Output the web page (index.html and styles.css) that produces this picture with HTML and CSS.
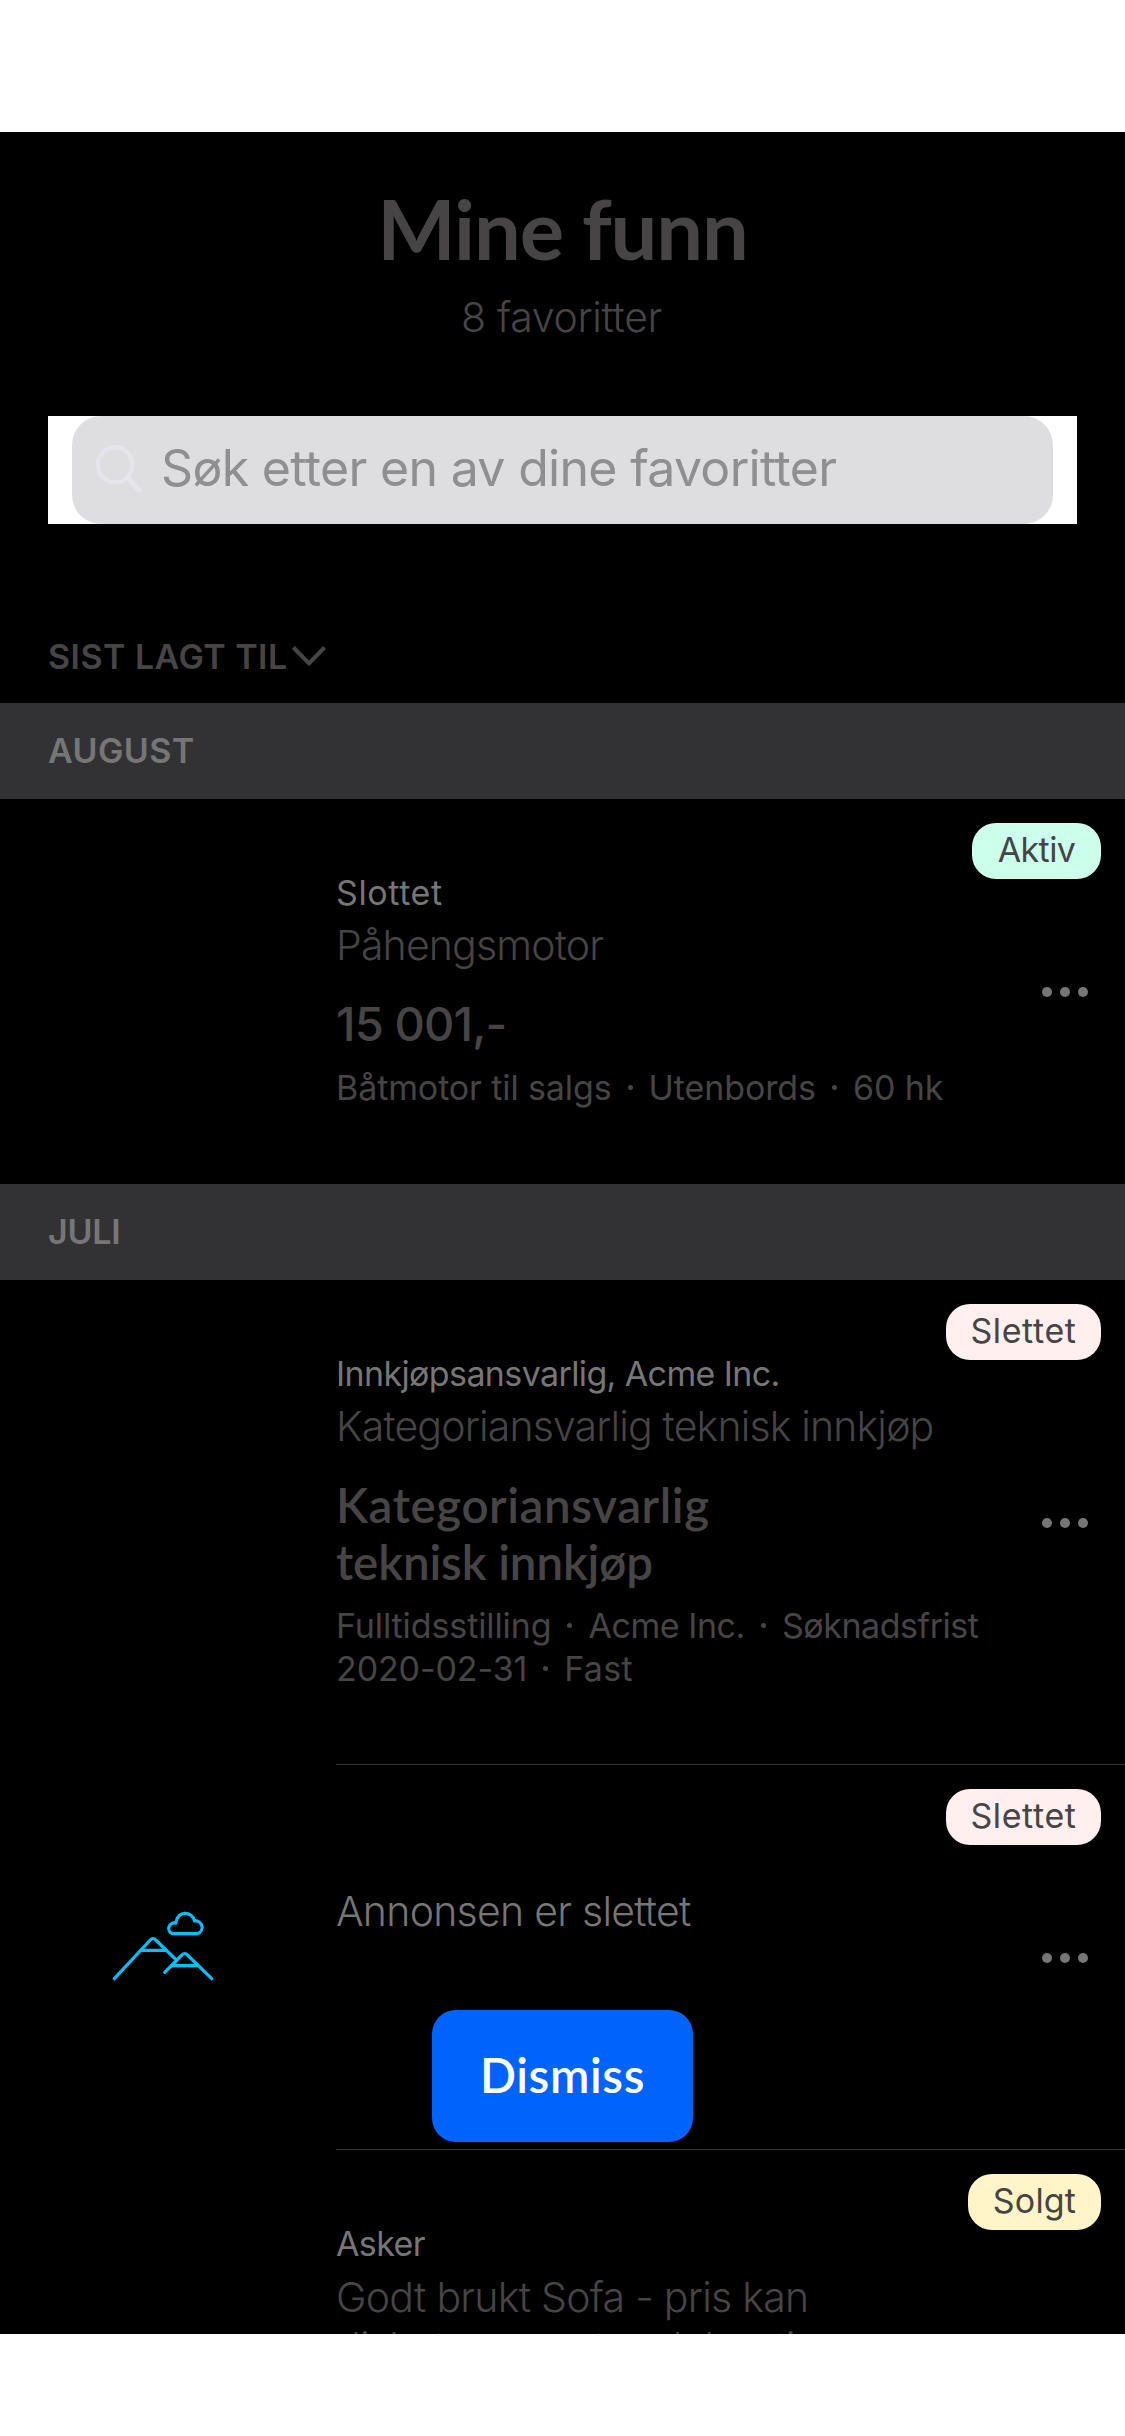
FILE: index.html
```html
<!DOCTYPE html>
<html lang="nb">
<head>
<meta charset="utf-8">
<title>Mine funn</title>
<link rel="stylesheet" href="styles.css">
</head>
<body>
<main class="screen">
  <header class="header">
    <h1 class="title">Mine funn</h1>
    <p class="count">8 favoritter</p>
    <div class="search">
      <div class="search-field">
        <svg class="search-icon" width="48" height="50" viewBox="0 0 48 50" fill="none" stroke="#e5e5ec" stroke-linecap="round">
          <ellipse cx="21" cy="20.8" rx="17.2" ry="17.5" stroke-width="4.4"/>
          <path d="M33.5 34 L45 46" stroke-width="5.4"/>
        </svg>
        <span class="placeholder">Søk etter en av dine favoritter</span>
      </div>
    </div>
    <div class="sort">
      <span class="sort-label">SIST LAGT TIL</span>
      <svg class="chevron" width="34" height="22" viewBox="0 0 34 22" fill="none" stroke="#474445" stroke-width="4">
        <path d="M1.5 1.5 L17 17.5 L32.5 1.5"/>
      </svg>
    </div>
  </header>

  <h2 class="section">AUGUST</h2>
  <article class="row row-short">
    <div class="thumb"></div>
    <div class="content">
      <div class="info">
        <p class="place place-loose">Slottet</p>
        <p class="name">Påhengsmotor</p>
        <p class="price price-amount">15 001,-</p>
        <p class="details">Båtmotor til salgs<i class="sep"></i>Utenbords<i class="sep"></i>60 hk</p>
      </div>
      <div class="more"><i></i><i></i><i></i></div>
    </div>
    <span class="badge badge-active">Aktiv</span>
  </article>

  <h2 class="section section-tight">JULI</h2>
  <article class="row row-tall">
    <div class="thumb"></div>
    <div class="content divided">
      <div class="info">
        <p class="place">Innkjøpsansvarlig, Acme Inc.</p>
        <p class="name">Kategoriansvarlig teknisk innkjøp</p>
        <p class="price">Kategoriansvarlig<br><span class="price-tight">teknisk innkjøp</span></p>
        <p class="details">Fulltidsstilling<i class="sep"></i><span class="details-tight">Acme Inc.</span><i class="sep"></i><span class="details-tight">Søknadsfrist</span><br>2020-02-31<i class="sep"></i><span class="details-loose">Fast</span></p>
      </div>
      <div class="more"><i></i><i></i><i></i></div>
    </div>
    <span class="badge badge-deleted">Slettet</span>
  </article>

  <article class="row row-short">
    <div class="thumb">
      <svg class="mountains" width="102" height="70" viewBox="0 0 102 70" fill="none" stroke="#06befb" stroke-width="3.2" stroke-linecap="round" stroke-linejoin="round">
        <path d="M2.3 67.7 L38.3 29 Q41 26 43.8 29 L64 48.6"/>
        <path d="M29 39.4 H54"/>
        <path d="M52.7 61.3 L69.9 44 Q72.7 41 75.5 44 L99.7 67.7"/>
        <path d="M60 54.6 H85.7"/>
        <path d="M60.5 22.6 A5.2 5.2 0 0 1 63.8 12.2 C64.4 6 68.4 2.4 73 2.4 C77.6 2.4 81.2 5.4 82.6 10 A6.5 6.5 0 0 1 85.6 22.6 Z"/>
      </svg>
    </div>
    <div class="content divided">
      <div class="info info-deleted">
        <p class="name name-deleted">Annonsen er slettet</p>
      </div>
      <div class="more"><i></i><i></i><i></i></div>
    </div>
    <span class="badge badge-deleted">Slettet</span>
  </article>

  <article class="row row-short">
    <div class="thumb"></div>
    <div class="content">
      <div class="info">
        <p class="place">Asker</p>
        <p class="name name-item">Godt brukt Sofa - pris kan<br>diskuteres mot rask henting</p>
      </div>
    </div>
    <span class="badge badge-sold">Solgt</span>
  </article>

  <button class="dismiss" type="button">Dismiss</button>
</main>
</body>
</html>
```
FILE: styles.css
```css
* { box-sizing: border-box; margin: 0; padding: 0; }

html, body { height: 2436px; }

body {
  display: flow-root;
  background: #fff;
  font-family: Inter, "Noto Sans", sans-serif;
  font-size: 34px;
  line-height: 43px;
  color: #474445;
}

.screen {
  position: relative;
  height: 2202px;
  margin-top: 132px;
  overflow: hidden;
  background: #000;
}

/* Header */
.header {
  display: flex;
  flex-direction: column;
  align-items: center;
  height: 571px;
  padding: 47px 48px 0;
}
.title {
  font-family: Lato, "Noto Sans", sans-serif;
  font-size: 83px;
  font-weight: 700;
  line-height: 98px;
  letter-spacing: -1.1px;
}
.count {
  margin-top: 15px;
  font-size: 41px;
  font-weight: 300;
  line-height: 50px;
  letter-spacing: -0.3px;
  transform: translateX(-1px);
}
.search {
  width: 1029px;
  height: 108px;
  margin-top: 74px;
  padding: 0 24px;
  background: #fff;
}
.search-field {
  display: flex;
  align-items: center;
  height: 108px;
  padding: 0 22px 3px;
  border-radius: 29px;
  background: #dedee0;
}
.search-icon { flex: none; }
.placeholder {
  margin-left: 19px;
  font-size: 50px;
  letter-spacing: -0.68px;
  color: #8e8e93;
  white-space: nowrap;
}
.sort {
  display: flex;
  align-self: flex-start;
  align-items: center;
  margin-top: 111px;
}
.sort-label { font-weight: 600; letter-spacing: 0.45px; }
.chevron { margin-left: 4px; }

/* Month headings */
.section {
  height: 96px;
  padding: 26px 48px 0;
  background: #323234;
  font-size: 34px;
  font-weight: 600;
  letter-spacing: 0.4px;
  color: #767676;
}
.section-tight { letter-spacing: -0.2px; }

/* List rows */
.row { position: relative; display: flex; }
.row-short { height: 385px; }
.row-tall { height: 485px; }
.thumb { flex: none; width: 336px; padding: 146px 0 0 112px; }
.mountains { display: block; }
.content {
  display: flex;
  flex: 1;
  justify-content: space-between;
  padding-right: 37px;
}
.divided { border-bottom: 1px solid #38383a; }
.info { width: 656px; padding-top: 72px; }
.info-deleted { padding-top: 121px; }
.place { letter-spacing: -0.62px; color: #767676; }
.place-loose { letter-spacing: 0.6px; }
.name {
  margin-top: 6px;
  font-size: 41px;
  font-weight: 300;
  line-height: 50px;
  letter-spacing: -0.84px;
  white-space: nowrap;
}
.name-deleted { margin-top: 0; letter-spacing: -0.74px; color: #767676; }
.name-item { margin-top: 7px; letter-spacing: -0.72px; }
.price {
  margin-top: 25px;
  font-family: Lato, "Noto Sans", sans-serif;
  font-size: 47.5px;
  font-weight: 600;
  line-height: 57px;
  letter-spacing: 0.6px;
}
.price-tight { letter-spacing: -0.1px; }
.price-amount {
  font-family: Inter, "Noto Sans", sans-serif;
  font-size: 47px;
  font-weight: 500;
  letter-spacing: -0.85px;
}
.details { margin-top: 14px; letter-spacing: -0.1px; }
.details-tight { letter-spacing: -0.45px; }
.details-loose { letter-spacing: 0.3px; }
.sep {
  display: inline-block;
  width: 5px;
  height: 5px;
  margin: 0 16px 10px;
  border-radius: 50%;
  background: #474445;
}
.more { display: flex; align-self: center; gap: 8px; margin-top: 1px; }
.more i { width: 10px; height: 10px; border-radius: 50%; background: #767676; }

.badge {
  position: absolute;
  top: 24px;
  right: 24px;
  height: 56px;
  border-radius: 24px;
  line-height: 54px;
  text-align: center;
}
.badge-active { width: 129px; background: #ccffec; letter-spacing: -0.6px; }
.badge-deleted { width: 155px; background: #ffefef; letter-spacing: 0.6px; }
.badge-sold { width: 133px; background: #fff5c8; letter-spacing: 0.2px; }

.dismiss {
  position: absolute;
  top: 1878px;
  left: 432px;
  width: 261px;
  height: 132px;
  padding-bottom: 4px;
  border: 0;
  border-radius: 24px;
  background: #0063fb;
  color: #fff;
  font: 600 47.5px/57px Lato, "Noto Sans", sans-serif;
  letter-spacing: 0.6px;
}
```
